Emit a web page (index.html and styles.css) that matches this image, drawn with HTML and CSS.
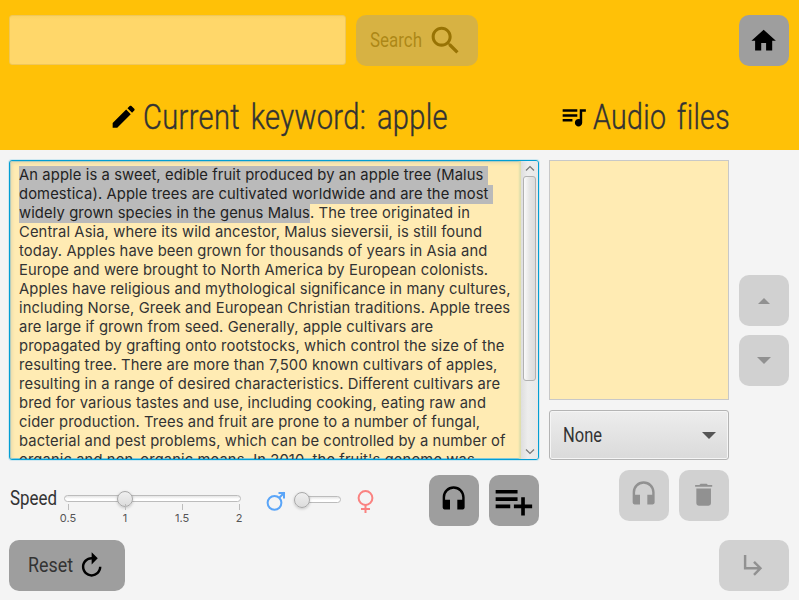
FILE: index.html
```html
<!DOCTYPE html>
<html lang="en">
<head>
<meta charset="utf-8">
<title>Audio editor</title>
<link rel="stylesheet" href="styles.css">
</head>
<body>
<svg class="defs" width="0" height="0">
  <symbol id="headset" viewBox="0 0 24 24"><path d="M12 1C7 1 3 5 3 10v8.500a1.500 1.500 0 0 0 1.500 1.500H9v-8H5v-2a7 7 0 0 1 14 0v2h-4v8h4.500a1.500 1.500 0 0 0 1.500-1.500V10c0-5-4-9-9-9z"/></symbol>
</svg>
<header class="top">
  <div class="searchbar">
    <input class="field" type="text" aria-label="Search">
    <button class="btn search disabled">
      <svg class="label" width="51" height="20"><text x="0" y="16" textLength="52" lengthAdjust="spacingAndGlyphs">Search</text></svg>
      <svg class="icon-search" viewBox="0 0 24 24"><path d="M15.500 14h-.79l-.28-.27C15.410 12.590 16 11.110 16 9.500 16 5.910 13.090 3 9.500 3S3 5.910 3 9.500 5.910 16 9.500 16c1.610 0 3.090-.59 4.230-1.570l.27.28v.79l5 4.990L20.490 19l-4.990-5zm-6 0C7.010 14 5 11.990 5 9.500S7.010 5 9.500 5 14 7.010 14 9.500 11.990 14 9.500 14z"/></svg>
    </button>
    <button class="btn home"><svg class="icon" viewBox="0 0 24 24"><path d="M10 20v-6h4v6h5v-8h3L12 3 2 12h3v8z"/></svg></button>
  </div>
  <div class="titles">
    <div class="title title-main">
      <svg class="icon" viewBox="0 0 24 24"><path d="M3 17.250V21h3.750L17.810 9.940l-3.750-3.750L3 17.250zM20.710 7.040c.39-.39.39-1.020 0-1.410l-2.340-2.340c-.39-.39-1.020-.39-1.410 0l-1.830 1.830 3.750 3.750 1.830-1.830z"/></svg>
      <svg class="heading" width="306" height="40"><text x="0" y="32" textLength="305" lengthAdjust="spacingAndGlyphs">Current keyword: apple</text></svg>
    </div>
    <div class="title title-audio">
      <svg class="icon" viewBox="0 0 24 24"><path d="M15 6H3v2h12V6zm0 4H3v2h12v-2zM3 16h8v-2H3v2zM17 6v8.180c-.31-.11-.65-.18-1-.18-1.660 0-3 1.340-3 3s1.340 3 3 3 3-1.340 3-3V8h3V6h-5z"/></svg>
      <svg class="heading" width="137" height="40"><text x="0" y="32" textLength="137" lengthAdjust="spacingAndGlyphs">Audio files</text></svg>
    </div>
  </div>
</header>
<main class="work">
  <section class="editor">
    <div class="text"><mark>An apple is a sweet, edible fruit produced by an apple tree (Malus </mark><br><mark>domestica). Apple trees are cultivated worldwide and are the most </mark><br><mark>widely grown species in the genus Malus</mark>. The tree originated in<br>Central Asia, where its wild ancestor, Malus sieversii, is still found<br>today. Apples have been grown for thousands of years in Asia and<br>Europe and were brought to North America by European colonists.<br>Apples have religious and mythological significance in many cultures,<br>including Norse, Greek and European Christian traditions. Apple trees<br>are large if grown from seed. Generally, apple cultivars are<br>propagated by grafting onto rootstocks, which control the size of the<br>resulting tree. There are more than 7,500 known cultivars of apples,<br>resulting in a range of desired characteristics. Different cultivars are<br>bred for various tastes and use, including cooking, eating raw and<br>cider production. Trees and fruit are prone to a number of fungal,<br>bacterial and pest problems, which can be controlled by a number of<br>organic and non-organic means. In 2010, the fruit's genome was</div>
    <div class="scroll">
      <svg class="chev" width="10" height="6"><path d="M1 5.500 5 1.500 9 5.500"/></svg>
      <div class="thumb"></div>
      <svg class="chev" width="10" height="6"><path d="M1 .5 5 4.500 9 .5"/></svg>
    </div>
  </section>
  <section class="files">
    <div class="list"></div>
    <div class="combo">
      <svg class="label" width="38" height="20"><text x="0" y="17" textLength="39" lengthAdjust="spacingAndGlyphs">None</text></svg>
      <svg class="tri" width="14" height="7"><path d="M0 0h14L7 7z"/></svg>
    </div>
  </section>
  <section class="order">
    <button class="btn disabled"><svg width="12" height="6"><path d="M0 6h12L6 0z"/></svg></button>
    <button class="btn disabled"><svg width="14" height="7"><path d="M0 0h14L7 7z"/></svg></button>
  </section>
</main>
<div class="controls">
  <div class="speed">
    <svg class="label" width="48" height="20"><text x="0" y="17" textLength="47" lengthAdjust="spacingAndGlyphs">Speed</text></svg>
    <div class="slider">
      <div class="track"><span class="knob"></span></div>
      <div class="ticks"><span>0.5</span><span>1</span><span>1.5</span><span>2</span></div>
    </div>
  </div>
  <div class="voice">
    <svg class="male" width="20" height="21"><path d="M18.500 1.500 13 7"/><path class="tip" d="M12.500 1H19v6.500h-2V4.500L15.500 3h-3z"/><circle cx="8.500" cy="11.800" r="6.900"/></svg>
    <div class="track small"><span class="knob"></span></div>
    <svg class="female" width="17" height="24"><circle cx="8.500" cy="8" r="6.900"/><path d="M8.500 15v8M4 19h9"/></svg>
  </div>
  <div class="actions">
    <button class="btn"><svg class="icon"><use href="#headset"/></svg></button>
    <button class="btn"><svg class="icon-add" viewBox="0 0 24 24"><path d="M14 10H2v2h12v-2zm0-4H2v2h12V6zm4 8v-4h-2v4h-4v2h4v4h2v-4h4v-2h-4zM2 16h8v-2H2v2z"/></svg></button>
  </div>
  <div class="file-actions">
    <button class="btn disabled"><svg class="icon"><use href="#headset"/></svg></button>
    <button class="btn disabled"><svg class="icon" viewBox="0 0 24 24"><path d="M19 4h-3.500l-1-1h-5l-1 1H5v1.600h14M6 19a2 2 0 0 0 2 2h8a2 2 0 0 0 2-2V7H6v12z"/></svg></button>
  </div>
</div>
<footer class="bottom">
  <button class="btn reset">
    <svg class="label" width="44" height="20"><text x="0" y="16" textLength="45" lengthAdjust="spacingAndGlyphs">Reset</text></svg>
    <svg class="icon flip" viewBox="0 0 24 24"><path d="M12 5V1L7 6l5 5V7c3.310 0 6 2.690 6 6s-2.690 6-6 6-6-2.690-6-6H4c0 4.420 3.580 8 8 8s8-3.580 8-8-3.580-8-8-8z"/></svg>
  </button>
  <button class="btn next disabled"><svg class="icon" viewBox="0 0 24 24"><path d="M19 15l-6 6-1.420-1.420L15.170 16H4V4h2v10h9.170l-3.590-3.580L13 9l6 6z"/></svg></button>
</footer>
</body>
</html>
```
FILE: styles.css
```css
* { box-sizing: border-box; }
body {
  margin: 0;
  width: 799px;
  height: 600px;
  overflow: hidden;
  background: #f4f4f4;
  font-family: Inter, "Liberation Sans", sans-serif;
  color: #333;
}
svg { display: block; flex: none; overflow: visible; }
.defs { position: absolute; }

.label text { font: 20px Roboto, sans-serif; fill: #333; }
.heading text { font: 300 34.5px Roboto, sans-serif; fill: #333; stroke: #333; stroke-width: .4px; letter-spacing: .4px; word-spacing: 4px; }
.icon { width: 29.3px; height: 29.3px; }
.icon-search { width: 37px; height: 37px; }
.icon-add { width: 43.8px; height: 43.8px; }
.flip { transform: scaleX(-1); }

.btn {
  display: flex;
  align-items: center;
  justify-content: center;
  flex: none;
  width: 50px;
  height: 51px;
  padding: 0;
  border: 0;
  border-radius: 10px;
  background: #9e9e9e;
  color: #000;
}
.disabled { opacity: .4; }

.top { height: 150px; padding: 15px 10px 0 9px; background: #ffc107; }
.searchbar { display: flex; }
.field {
  width: 337px;
  height: 50px;
  margin-right: 10px;
  border: 1px solid #efc75a;
  border-radius: 3px;
  background: linear-gradient(#fbd362, #ffd76a 4px);
  outline: 0;
}
.search { width: 122px; gap: 6px; }
.search .icon-search { margin-top: -1px; }
.home { margin-left: auto; }
.titles { display: flex; margin-top: 31px; }
.title { display: flex; align-items: flex-start; }
.title .icon { margin-top: 5px; }
.title-main { margin-left: 100px; gap: 5px; }
.title-audio { margin-left: 110px; gap: 4px; }

.work { display: flex; gap: 10px; height: 310px; padding: 10px 10px 0 9px; }
.editor {
  display: flex;
  width: 530px;
  height: 300px;
  border: 1px solid #039ed3;
  border-radius: 3px;
  box-shadow: 0 0 0 1px #cfe8f1, inset 0 0 0 1px #7cc7dc;
  background: #ffebb3;
  overflow: hidden;
}
.text {
  flex: 1;
  padding: 4.6px 0 0 9px;
  font-size: 14.75px;
  line-height: 19px;
  white-space: pre;
  letter-spacing: .11px;
  box-shadow: inset 3px 3px 4px -2px #d9cfa8, inset -3px 0 2px -1px #dfdfad;
}
mark { display: inline-block; height: 19px; background: #bababa; color: #222; }
.scroll {
  display: flex;
  flex-direction: column;
  align-items: center;
  width: 17px;
  flex: none;
  padding: 4px 0;
  background: linear-gradient(90deg, #dedede, #ededed 40%, #e8e8e8);
}
.chev { fill: none; stroke: #777; stroke-width: 1.2; }
.thumb {
  width: 13px;
  height: 205px;
  margin: 5px 0 auto;
  border: 1px solid #b1b1b1;
  border-radius: 3px;
  background: linear-gradient(90deg, #fafafa, #e5e5e5 50%, #dcdcdc);
}
.files { display: flex; flex-direction: column; gap: 10px; width: 180px; }
.list { height: 240px; border: 1px solid #c8c8c8; background: #ffebb3; }
.combo {
  display: flex;
  align-items: center;
  justify-content: space-between;
  height: 50px;
  padding: 0 12px 0 13px;
  border: 1px solid #b4b4b4;
  border-radius: 3px;
  background: linear-gradient(#ededed, #dadada);
  box-shadow: inset 0 0 0 1px #f5f5f5;
}
.combo .tri { fill: #555; }
.order { padding-top: 115px; display: flex; flex-direction: column; gap: 9px; }

.controls { display: flex; height: 80px; padding-left: 10px; }
.speed { display: flex; width: 232px; padding-top: 28px; }
.slider { width: 177px; margin: 7px 0 0 6px; }
.track {
  display: flex;
  align-items: center;
  height: 7px;
  border: 1px solid #bcbcbc;
  border-radius: 4px;
  background: linear-gradient(#e4e4e4, #fff 60%);
}
.knob {
  flex: none;
  width: 16px;
  height: 16px;
  margin-left: 52px;
  border: 1px solid #a8a8a8;
  border-radius: 50%;
  background: linear-gradient(#efefef, #dcdcdc);
  box-shadow: 0 1px 3px #0003;
}
.ticks { display: flex; justify-content: space-between; margin: 2px -13px 0 -11px; }
.ticks span { width: 30px; font-size: 11px; line-height: 16px; text-align: center; color: #555; }
.ticks span::before { content: ""; display: block; width: 1px; height: 6px; margin: 0 auto; background: #bcbcbc; }
.voice { display: flex; align-items: flex-start; width: 187px; padding: 29px 0 0 24px; }
.male, .female { fill: none; stroke-width: 2; }
.male { stroke: #5aa5f8; margin-top: 2px; }
.tip { fill: #5aa5f8; stroke: none; }
.female { stroke: #fa8280; margin: 1px 0 0 16px; }
.small { width: 46px; margin: 7px 0 0 9px; }
.small .knob { margin-left: -2px; }
.actions { display: flex; gap: 10px; padding-top: 15px; }
.actions .icon, .file-actions .icon { margin-top: -2px; }
.file-actions { display: flex; gap: 10px; padding-top: 10px; margin-left: 80px; }

.bottom { display: flex; justify-content: space-between; padding: 0 10px 0 9px; }
.reset { width: 116px; gap: 5px; }
.next { width: 70px; }
.next .icon { margin-top: -2px; }
```
